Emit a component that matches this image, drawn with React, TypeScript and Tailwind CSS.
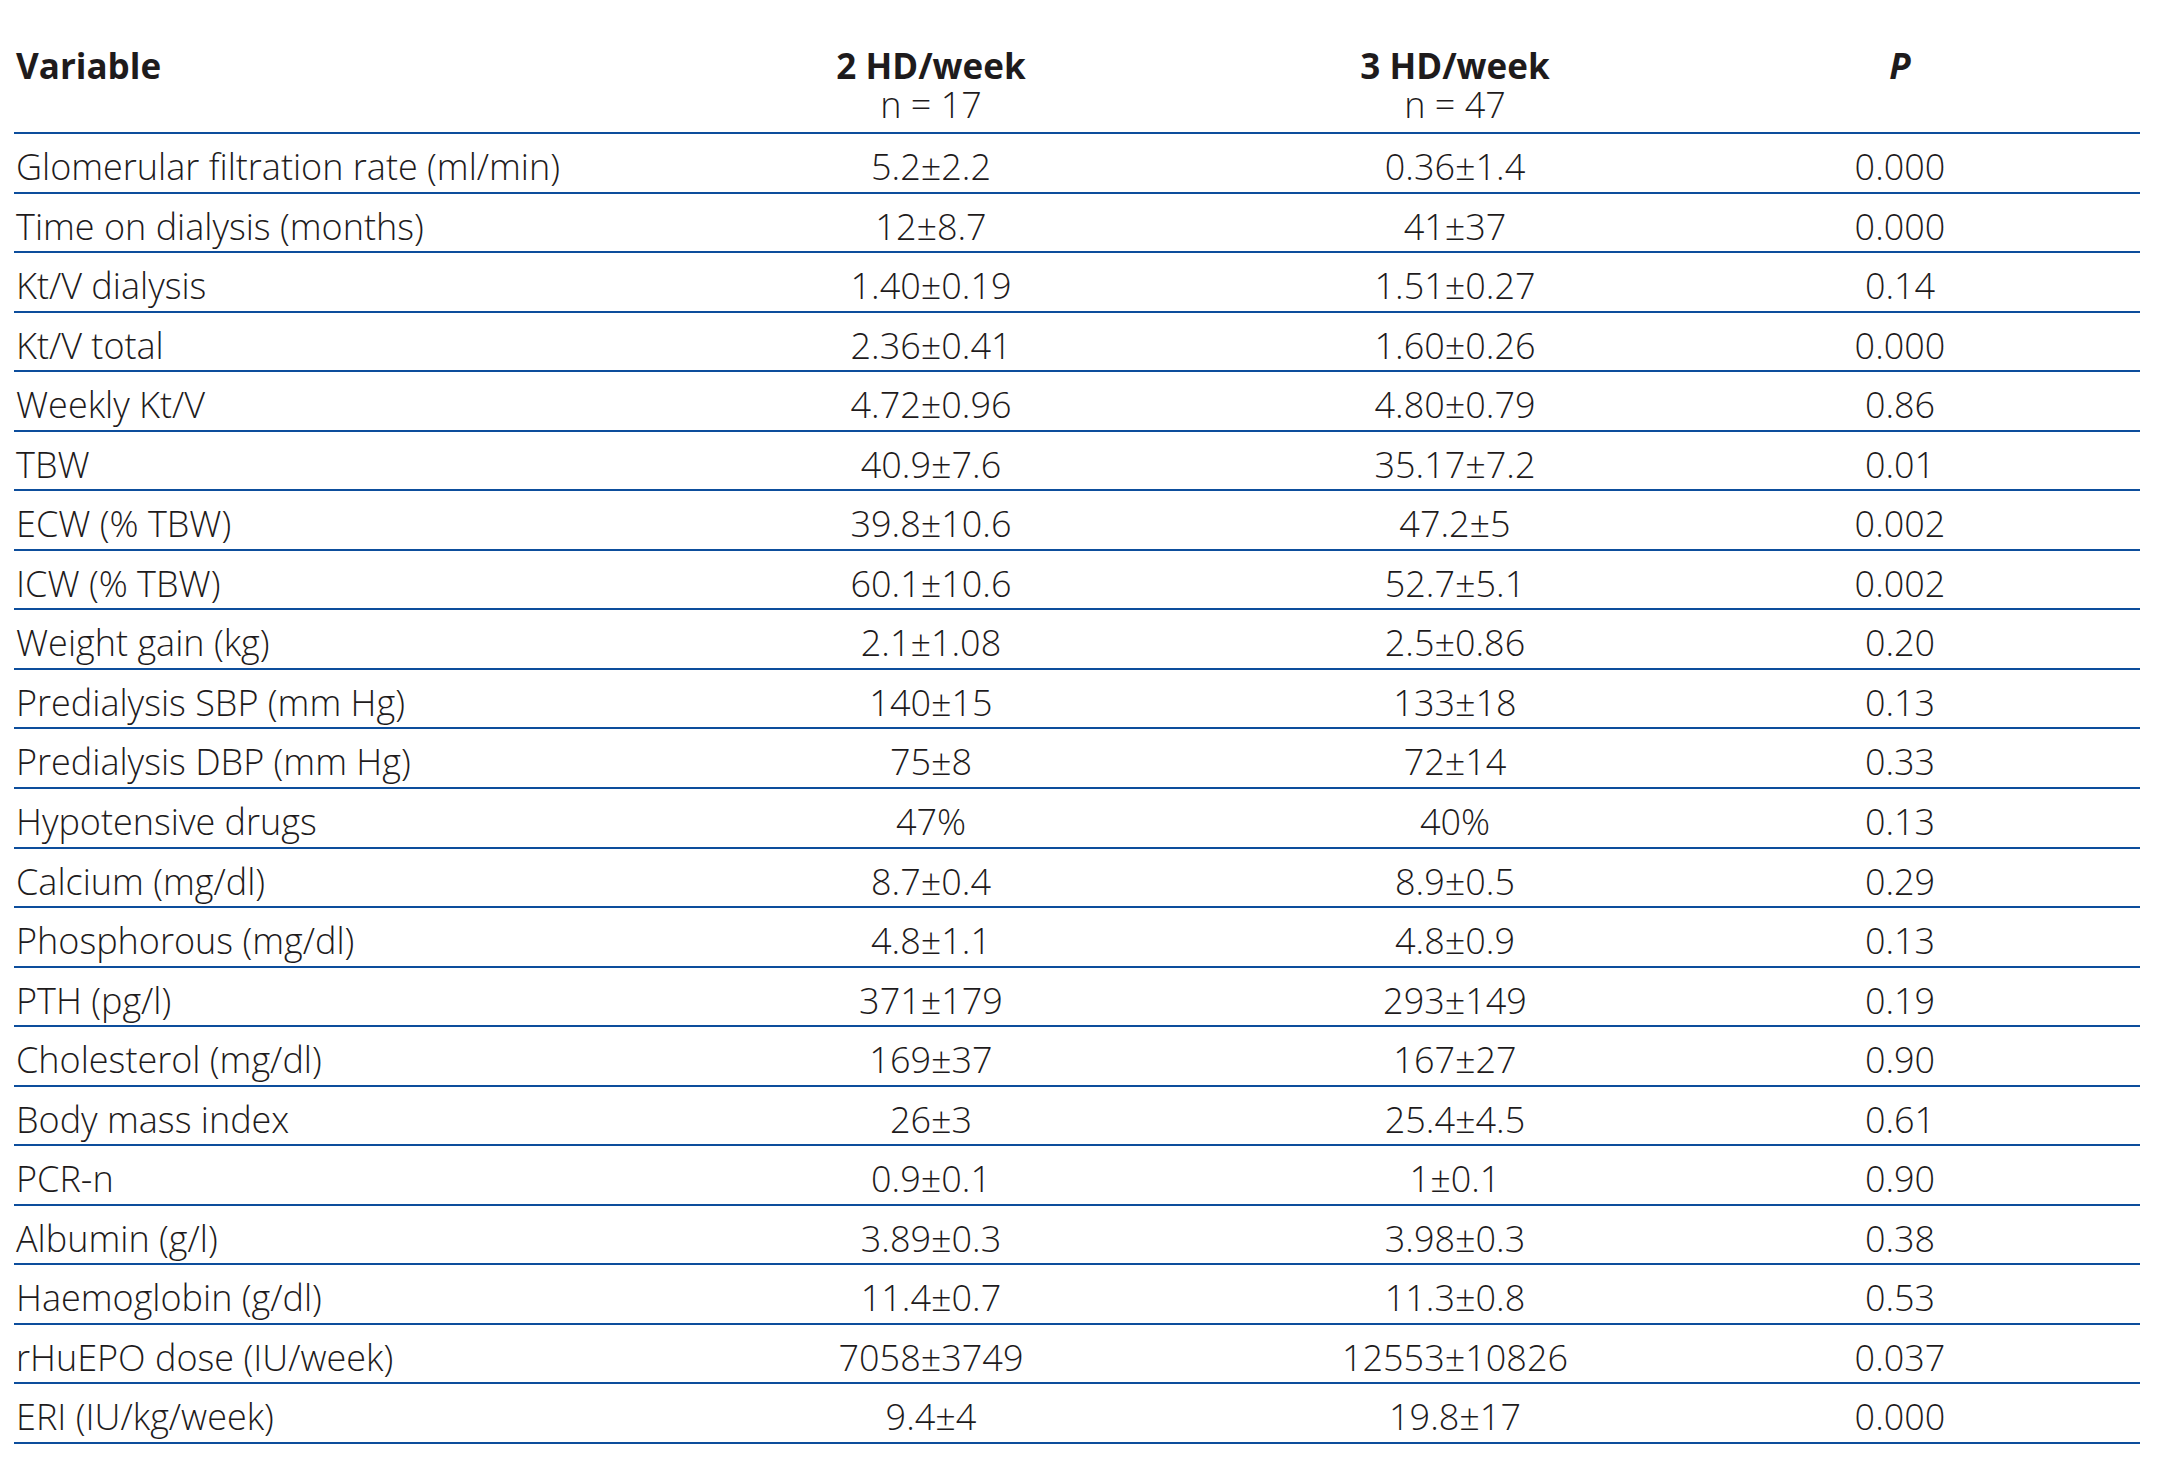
const rows: [string, string, string, string][] = [
  ["Glomerular filtration rate (ml/min)", "5.2±2.2", "0.36±1.4", "0.000"],
  ["Time on dialysis (months)", "12±8.7", "41±37", "0.000"],
  ["Kt/V dialysis", "1.40±0.19", "1.51±0.27", "0.14"],
  ["Kt/V total", "2.36±0.41", "1.60±0.26", "0.000"],
  ["Weekly Kt/V", "4.72±0.96", "4.80±0.79", "0.86"],
  ["TBW", "40.9±7.6", "35.17±7.2", "0.01"],
  ["ECW (% TBW)", "39.8±10.6", "47.2±5", "0.002"],
  ["ICW (% TBW)", "60.1±10.6", "52.7±5.1", "0.002"],
  ["Weight gain (kg)", "2.1±1.08", "2.5±0.86", "0.20"],
  ["Predialysis SBP (mm Hg)", "140±15", "133±18", "0.13"],
  ["Predialysis DBP (mm Hg)", "75±8", "72±14", "0.33"],
  ["Hypotensive drugs", "47%", "40%", "0.13"],
  ["Calcium (mg/dl)", "8.7±0.4", "8.9±0.5", "0.29"],
  ["Phosphorous (mg/dl)", "4.8±1.1", "4.8±0.9", "0.13"],
  ["PTH (pg/l)", "371±179", "293±149", "0.19"],
  ["Cholesterol (mg/dl)", "169±37", "167±27", "0.90"],
  ["Body mass index", "26±3", "25.4±4.5", "0.61"],
  ["PCR-n", "0.9±0.1", "1±0.1", "0.90"],
  ["Albumin (g/l)", "3.89±0.3", "3.98±0.3", "0.38"],
  ["Haemoglobin (g/dl)", "11.4±0.7", "11.3±0.8", "0.53"],
  ["rHuEPO dose (IU/week)", "7058±3749", "12553±10826", "0.037"],
  ["ERI (IU/kg/week)", "9.4±4", "19.8±17", "0.000"],
];

// column widths: label | 2 HD | 3 HD | P (+ right gutter)
const cols = "grid grid-cols-[655px_524px_524px_423px]";

export default function App() {
  return (
    <div className="min-h-screen bg-white text-[#1e1b1c] font-['Open_Sans',sans-serif]">
      <div className="ml-[14px] w-[2126px] pt-[46px]">
        <div className={`${cols} h-[88px] border-b-2 border-[#0d4e9c]`}>
          <div className="pl-[2px] text-[35px] font-bold leading-[40px]">Variable</div>
          <div className="text-center">
            <div className="text-[35px] font-bold leading-[40px]">2 HD/week</div>
            <div className="text-[36px] font-light leading-[38px]">n = 17</div>
          </div>
          <div className="text-center">
            <div className="text-[35px] font-bold leading-[40px]">3 HD/week</div>
            <div className="text-[36px] font-light leading-[38px]">n = 47</div>
          </div>
          <div className="pr-[57px] text-center text-[35px] font-bold italic leading-[40px]">P</div>
        </div>
        {rows.map((r) => (
          <div
            key={r[0]}
            className={`${cols} h-[59.55px] items-center border-b-2 border-[#0d4e9c] pt-[6px] text-[36px] font-light`}
          >
            <div className="pl-[2px] whitespace-nowrap">{r[0]}</div>
            <div className="text-center">{r[1]}</div>
            <div className="text-center">{r[2]}</div>
            <div className="pr-[57px] text-center">{r[3]}</div>
          </div>
        ))}
      </div>
    </div>
  );
}
